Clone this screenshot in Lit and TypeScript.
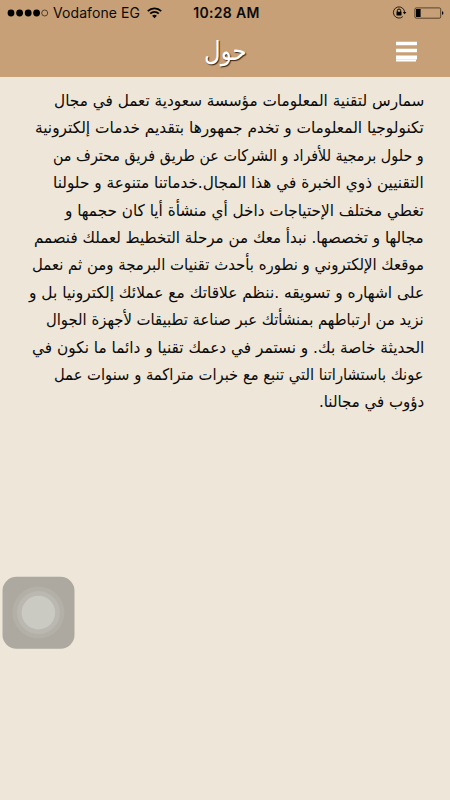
import { LitElement, html, css } from "lit";
import { customElement } from "lit/decorators.js";

interface Line { text: string; width: number; }

const LINES: Line[] = [
  { text: "سمارس لتقنية المعلومات مؤسسة سعودية تعمل في مجال", width: 370 },
  { text: "تكنولوجيا المعلومات و تخدم جمهورها بتقديم خدمات إلكترونية", width: 389 },
  { text: "و حلول برمجية للأفراد و الشركات عن طريق فريق محترف من", width: 371 },
  { text: "التقنيين ذوي الخبرة في هذا المجال.خدماتنا متنوعة و حلولنا", width: 371 },
  { text: "تغطي مختلف الإحتياجات داخل أي منشأة أيا كان حجمها و", width: 359 },
  { text: "مجالها و تخصصها. نبدأ معك من مرحلة التخطيط لعملك فنصمم", width: 390 },
  { text: "موقعك الإلكتروني و نطوره بأحدث تقنيات البرمجة ومن ثم نعمل", width: 392 },
  { text: "على اشهاره و تسويقه .ننظم علاقاتك مع عملائك إلكترونيا بل و", width: 395 },
  { text: "نزيد من ارتباطهم بمنشأتك عبر صناعة تطبيقات لأجهزة الجوال", width: 378 },
  { text: "الحديثة خاصة بك. و نستمر في دعمك تقنيا و دائما ما نكون في", width: 392 },
  { text: "عونك باستشاراتنا التي تنبع مع خبرات متراكمة و سنوات عمل", width: 370 },
  { text: "دؤوب في مجالنا.", width: 105 },
];

@customElement("app-root")
export class AppRoot extends LitElement {
  static styles = css`
    :host { display: block; position: relative; height: 800px; overflow: hidden; background: #ede6d9; color: #0c0a08; }
    header { height: 77px; background: #c7a077; }
    .status { height: 25px; display: grid; grid-template-columns: 1fr auto 1fr; align-items: center; font: 14px/25px Inter, sans-serif; }
    .left, .right { display: flex; align-items: center; }
    .left { padding-left: 7px; }
    .right { justify-content: flex-end; padding-right: 6px; gap: 7px; }
    .dots { margin-right: 4px; }
    .carrier { width: 94px; white-space: nowrap; letter-spacing: .08px; }
    .time { font-weight: 600; font-size: 14px; letter-spacing: .32px; padding-left: 3px; }
    svg { display: block; flex: none; }
    nav { height: 52px; display: grid; grid-template-columns: 1fr 50px 1fr; align-items: center; direction: rtl; }
    .menu { margin-right: 32px; }
    h1 { margin: 0; font: 400 24px/52px "DejaVu Sans", sans-serif; color: #fff; text-shadow: 1px 1px 1px #382413; display: flex; justify-content: center; }
    .title { display: block; transform: scale(.95, 1.12); transform-origin: center 54%; }
    .about { padding: 10px 26px 0; direction: rtl; font: 16px/27.4px "DejaVu Sans", sans-serif; }
    .line { height: 27.4px; white-space: nowrap; }
    .fit { display: inline-block; transform-origin: right center; }
    .assist { position: absolute; left: 2px; top: 576px; }
  `;

  async firstUpdated() {
    await document.fonts.ready;
    this.renderRoot.querySelectorAll<HTMLElement>("[data-width]").forEach((el) => {
      el.style.transform = `scaleX(${Number(el.dataset.width) / el.offsetWidth})`;
    });
  }

  render() {
    return html`
      <header>
        <div class="status">
          <div class="left">
            <svg class="dots" width="42" height="10" viewBox="0 0 42 10">
              <circle cx="4" cy="5" r="3.4"/><circle cx="12.6" cy="5" r="3.4"/><circle cx="21.2" cy="5" r="3.4"/><circle cx="29.6" cy="5" r="3.4"/>
              <circle cx="37.7" cy="5" r="3" fill="none" stroke="#21180f" stroke-width=".7"/>
            </svg>
            <span class="carrier">Vodafone EG</span>
            <svg width="15" height="12" viewBox="0 0 15 12" fill="none" stroke="#080604" stroke-width="1.8">
              <path d="M.8 4.1a9.5 9.5 0 0 1 13.4 0M3.2 6.7a6.1 6.1 0 0 1 8.6 0"/>
              <path d="M7.5 11.2 5.1 8.8a3.5 3.5 0 0 1 4.8 0z" fill="#080604" stroke="none"/>
            </svg>
          </div>
          <span class="time">10:28 AM</span>
          <div class="right">
            <svg width="15" height="13" viewBox="0 0 15 13">
              <path d="M12.6 6.5A5.6 5.6 0 1 0 10.8 10.6" fill="none" stroke="#17100a" stroke-width=".9"/>
              <path d="M10.9 6h3.4l-1.7 2.2z"/>
              <path d="M5.3 6V4.7a1.7 1.7 0 0 1 3.4 0V6" fill="none" stroke="#000"/>
              <rect x="4.5" y="5.7" width="5" height="3.8" rx=".4"/>
            </svg>
            <svg width="30" height="12" viewBox="0 0 30 12">
              <rect x=".9" y=".9" width="25.8" height="10.3" rx="1.4" fill="none" stroke="#38291b" stroke-width=".8"/>
              <rect x="2" y="2" width="4.6" height="8"/><path d="M28 4.2q1.4.3 1.4 1.8T28 7.8z"/>
            </svg>
          </div>
        </div>
        <nav>
          <svg class="menu" width="22" height="21" viewBox="0 0 22 21" fill="#fff">
            <path d="M0 .7h21v3.6H0zM0 7.7h21v3.6H0zM0 14.4h21v4H0zM0 18.8h20v1.7H0z"/>
          </svg>
          <h1><span class="title">حول</span></h1>
        </nav>
      </header>
      <main class="about">
        ${LINES.map((l) => html`<div class="line"><span class="fit" data-width=${l.width}>${l.text}</span></div>`)}
      </main>
      <svg class="assist" width="73" height="73" viewBox="0 0 73 73">
        <rect x=".5" y=".8" width="72" height="72" rx="14" fill="#ada9a0"/>
        <circle cx="36.4" cy="36.6" r="26" fill="#b3b0a8"/>
        <circle cx="36.4" cy="36.6" r="21.5" fill="#bab8b0"/>
        <circle cx="36.4" cy="36.6" r="16.8" fill="#cbcac2"/>
      </svg>
    `;
  }
}
